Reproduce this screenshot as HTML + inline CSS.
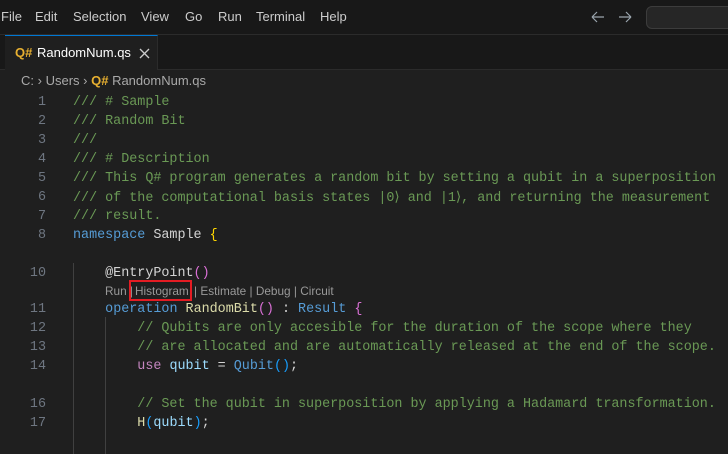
<!DOCTYPE html>
<html><head><meta charset="utf-8"><style>
*{margin:0;padding:0;box-sizing:border-box}
body{width:728px;height:454px;overflow:hidden;background:#1f1f1f;font-family:"Liberation Sans",sans-serif;position:relative}
.menu{position:absolute;left:0;top:0;width:728px;height:35px;background:#181818;border-bottom:1px solid #2b2b2b}
.menu span{position:absolute;top:9px;font-size:13px;color:#cccccc}
.tabs{position:absolute;left:0;top:35px;width:728px;height:35px;background:#181818;border-bottom:1px solid #2b2b2b}
.tab{position:absolute;left:5px;top:0;width:153px;height:35px;background:#1f1f1f;border-top:1px solid #0078d4;border-right:1px solid #2b2b2b}
.q{color:#e8b030;font-weight:bold}
.crumb{position:absolute;left:21px;top:73px;font-size:13px;color:#a9a9a9}
.ln{position:absolute;left:0;width:46px;text-align:right;font-family:"Liberation Mono",monospace;font-size:13.4px;color:#6e7681}
.cd{position:absolute;left:73px;font-family:"Liberation Mono",monospace;font-size:13.4px;color:#d4d4d4;white-space:pre}
.c{color:#6a9955}.k{color:#569cd6}.f{color:#dcdcaa}.t{color:#4ec9b0}.v{color:#9cdcfe}.y{color:#ffd700}.p{color:#da70d6}.b{color:#179fff}.u{color:#c586c0}
.g{position:absolute;width:1px;background:#404040}
.lens{position:absolute;top:284px;font-size:11.8px;color:#999999;white-space:pre}
</style></head><body>
<div class="menu">
<span style="left:1px">File</span><span style="left:35px">Edit</span><span style="left:73px">Selection</span><span style="left:141px">View</span><span style="left:185px">Go</span><span style="left:218px">Run</span><span style="left:256px">Terminal</span><span style="left:320px">Help</span>
<svg style="position:absolute;left:590px;top:9px" width="50" height="16" viewBox="0 0 50 16"><path d="M2 8h12M2 8l5-5M2 8l5 5" stroke="#9aa4ad" stroke-width="1.2" fill="none"/><path d="M29 8h12M41 8l-5-5M41 8l-5 5" stroke="#9aa4ad" stroke-width="1.2" fill="none"/></svg>
<div style="position:absolute;left:646px;top:6px;width:90px;height:23px;border:1px solid #3c3c3c;border-radius:6px;background:#262626"></div>
</div>
<div class="tabs"><div class="tab">
<span class="q" style="position:absolute;left:10px;top:9px;font-size:13px">Q#</span>
<span style="position:absolute;left:32px;top:9px;font-size:13px;color:#ffffff">RandomNum.qs</span>
<svg style="position:absolute;left:134px;top:12px" width="11" height="11" viewBox="0 0 11 11"><path d="M1 1L10 10M10 1L1 10" stroke="#cccccc" stroke-width="1.3"/></svg>
</div></div>
<div class="crumb">C: <span style="color:#aaa">›</span> Users <span>›</span> <span class="q">Q#</span> RandomNum.qs</div>

<div class="g" style="left:73px;top:263px;height:191px"></div>
<div class="g" style="left:105px;top:317px;height:137px"></div>

<div class="lens" style="left:105px">Run |</div>
<div class="lens" style="left:135px">Histogram</div>
<div style="position:absolute;left:129px;top:280px;width:63px;height:21px;border:2px solid #e51c23"></div>
<div class="lens" style="left:194px">| Estimate | Debug | Circuit</div>

<div class="ln" style="top:95px">1</div><div class="cd c" style="top:95px">/// # Sample</div>
<div class="ln" style="top:114px">2</div><div class="cd c" style="top:114px">/// Random Bit</div>
<div class="ln" style="top:133px">3</div><div class="cd c" style="top:133px">///</div>
<div class="ln" style="top:152px">4</div><div class="cd c" style="top:152px">/// # Description</div>
<div class="ln" style="top:171px">5</div><div class="cd c" style="top:171px">/// This Q# program generates a random bit by setting a qubit in a superposition</div>
<div class="ln" style="top:190px">6</div><div class="cd c" style="top:190px">/// of the computational basis states |0⟩ and |1⟩, and returning the measurement</div>
<div class="ln" style="top:209px">7</div><div class="cd c" style="top:209px">/// result.</div>
<div class="ln" style="top:228px">8</div><div class="cd" style="top:228px"><span class="k">namespace</span> Sample <span class="y">{</span></div>
<div class="ln" style="top:266px">10</div><div class="cd" style="top:266px">    @EntryPoint<span class="p">()</span></div>
<div class="ln" style="top:302px">11</div><div class="cd" style="top:302px">    <span class="k">operation</span> <span class="f">RandomBit</span><span class="p">()</span> : <span class="k">Result</span> <span class="p">{</span></div>
<div class="ln" style="top:321px">12</div><div class="cd c" style="top:321px">        // Qubits are only accesible for the duration of the scope where they</div>
<div class="ln" style="top:340px">13</div><div class="cd c" style="top:340px">        // are allocated and are automatically released at the end of the scope.</div>
<div class="ln" style="top:359px">14</div><div class="cd" style="top:359px">        <span class="u">use</span> <span class="v">qubit</span> = <span class="k">Qubit</span><span class="b">()</span>;</div>
<div class="ln" style="top:397px">16</div><div class="cd c" style="top:397px">        // Set the qubit in superposition by applying a Hadamard transformation.</div>
<div class="ln" style="top:416px">17</div><div class="cd" style="top:416px">        <span class="f">H</span><span class="b">(</span><span class="v">qubit</span><span class="b">)</span>;</div>
</body></html>
